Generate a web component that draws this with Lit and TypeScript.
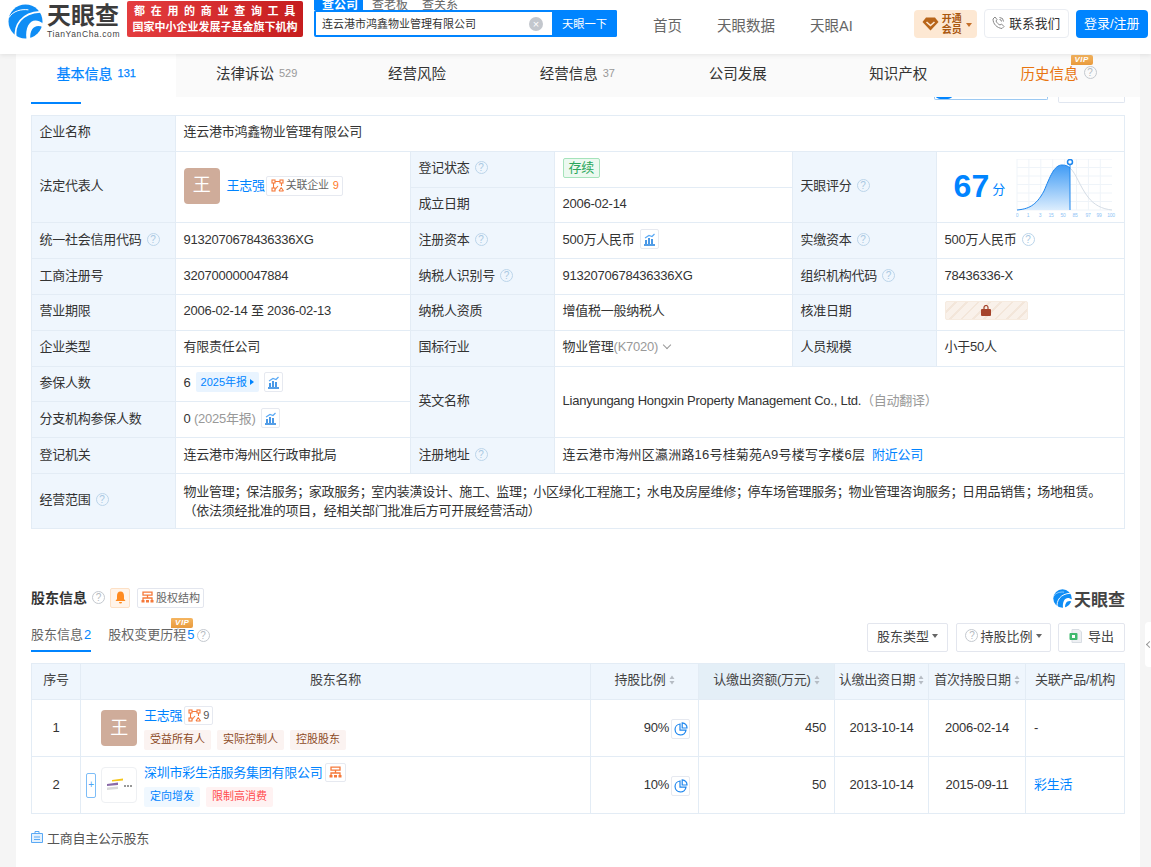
import { LitElement, html, css, svg } from "lit";
import { customElement } from "lit/decorators.js";

const swirl = (size: number) => html`<svg width=${size} height=${size} viewBox="0 0 36 36">
  <circle cx="18" cy="18" r="17.5" fill="#0f8df5"></circle>
  <path d="M8 35C6 22 14 9 33 8" fill="none" stroke="#fff" stroke-width="1.8"></path>
  <path d="M36 20C26 12 17 20 19 36L23 36C22 26 28 20 36 24Z" fill="#fff"></path>
  <path d="M1 14C5 7 14 5 21 6" fill="none" stroke="#fff" stroke-width="1"></path>
</svg>`;

const help = () => html`<span class="help">?</span>`;
const trend = () => html`<span class="mini"><svg width="13" height="13" viewBox="0 0 13 13">
  <path d="M1 12H12M3 11V7M6 11V5M9 11V6" fill="none" stroke="#1d7fe0" stroke-width="1.6"></path>
  <path d="M2 5L6 2.5L9 3.5L11.5 1" fill="none" stroke="#5aa9f5" stroke-width="1.2"></path>
</svg></span>`;
const graph = () => html`<svg width="13" height="13" viewBox="0 0 13 13" fill="none" stroke="#f5793a" stroke-width="1.1">
  <rect x="1" y="1" width="3" height="3"></rect><rect x="9" y="1" width="3" height="3"></rect>
  <rect x="1" y="9" width="3" height="3"></rect><path d="M4 2.5H9M2.5 4V9M7 7L4 10.5M10.5 4V7M8 12H12.5M10.2 8.5L8 12M10.2 8.5L12.5 12"></path>
</svg>`;
const orgIcon = () => html`<svg width="13" height="12" viewBox="0 0 13 12" fill="none" stroke="#f5793a" stroke-width="1.3">
  <path d="M2 1.2H11V4.2H2ZM6.5 4.2V7M2 10V7H11V10"></path><path d="M0.5 9H3.5V11.5H0.5ZM5 9H8V11.5H5ZM9.5 9H12.5V11.5H9.5Z" fill="#f5793a" stroke="none"></path>
</svg>`;
const pie = () => html`<span class="mini pie"><svg width="14" height="14" viewBox="0 0 14 14" fill="none" stroke="#1d86ee" stroke-width="1.2">
  <path d="M6 2A5.5 5.5 0 1 0 12 8.2H6Z"></path><path d="M8.2 0.8A5 5 0 0 1 13 6H8.2Z"></path>
</svg></span>`;
const sort = () => html`<svg class="sort" width="6" height="10" viewBox="0 0 6 10"><path d="M3 0.5L5.5 4H0.5ZM3 9.5L5.5 6H0.5Z" fill="#b6bcc4"></path></svg>`;
const vip = (cls: string) => html`<span class="vip ${cls}">VIP</span>`;

const gridLines = () => {
  const out = [];
  for (let x = 1; x <= 96; x += 11.9) out.push(svg`<path d="M${x} 0V51" stroke="#eff4f9" stroke-width="1"></path>`);
  for (let y = 0; y <= 51; y += 8.5) out.push(svg`<path d="M1 ${y}H96" stroke="#eff4f9" stroke-width="1"></path>`);
  return out;
};
const chartLabels: [string, number][] = [["0", 1], ["1", 12], ["3", 24], ["15", 35], ["50", 47], ["85", 59], ["97", 72], ["99", 83], ["100", 95]];

const SCOPE = "物业管理；保洁服务；家政服务；室内装潢设计、施工、监理；小区绿化工程施工；水电及房屋维修；停车场管理服务；物业管理咨询服务；日用品销售；场地租赁。";
const scopeText = () => SCOPE.split(/([；、。])/).map((s) => (/^[；、。]$/.test(s) ? html`<span class="p">${s}</span>` : s));

@customElement("app-root")
export class AppRoot extends LitElement {
  static styles = css`
    :host { display: block; font-family: "Liberation Sans", "Noto Sans CJK SC", sans-serif; font-size: 13px; color: #333; }
    * { box-sizing: border-box; }
    .page { min-height: 867px; height: 867px; overflow: hidden; background: #f5f5f5; position: relative; }
    header { height: 54px; background: #fff; display: flex; align-items: center; position: relative; z-index: 2; box-shadow: 0 1px 5px rgba(0,0,0,.09); overflow: hidden; }
    .logo { margin-left: 8px; display: flex; gap: 4px; align-items: center; height: 37px; margin-top: -11px; width: 112px; flex: none; }
    .logo-words { display: flex; flex-direction: column; width: 73px; }
    .logo-cn { font-size: 24px; line-height: 23px; font-weight: 700; color: #3c3c3c; letter-spacing: 0; }
    .logo-en { font-size: 8.5px; line-height: 12px; margin-top: 1px; color: #444; letter-spacing: .6px; white-space: nowrap; font-weight: 400; }
    .banner { margin-left: 7px; margin-top: -16px; width: 176px; height: 36px; border-radius: 2px; background: linear-gradient(90deg, #e43d3f, #c61d1e); color: #fff; font-size: 11px; line-height: 16px; font-weight: 700; display: flex; flex-direction: column; justify-content: center; align-items: center; flex: none; }
    .banner .spaced { letter-spacing: 5.7px; margin-right: -5px; }
    .search { margin-left: 11px; width: 303px; align-self: flex-start; flex: none; }
    .search-tabs { display: flex; height: 10px; overflow: hidden; align-items: flex-end; font-size: 12px; color: #666; }
    .search-tabs span { line-height: 10px; height: 10px; padding: 0 8px; margin-right: 1px; width: 49px; white-space: nowrap; }
    .search-tabs span.on { background: #0084ff; color: #fff; font-weight: 700; }
    .search-box { height: 27px; border: 2px solid #0084ff; border-radius: 2px; display: flex; align-items: center; }
    .search-text { flex: 1; padding: 0 0 2px 6px; font-size: 11px; color: #333; }
    .clear { width: 14px; height: 14px; border-radius: 50%; background: #c3c7cd; color: #fff; font-size: 11px; line-height: 14px; text-align: center; margin-right: 9px; }
    .go { width: 65px; height: 27px; margin-right: -2px; padding-bottom: 2px; background: #0084ff; color: #fff; font-size: 11.3px; display: flex; align-items: center; justify-content: center; border-radius: 0 2px 2px 0; }
    nav { display: flex; gap: 35px; margin-left: 36px; margin-top: -6px; font-size: 14.5px; color: #666; flex: none; }
    .open-vip { margin-left: 61px; margin-top: -6px; width: 63px; height: 28px; border-radius: 4px; background: #fde8d3; display: flex; align-items: center; padding-left: 8px; gap: 3px; color: #a9570f; font-size: 10px; line-height: 11px; font-weight: 700; flex: none; }
    .open-vip .caret { width: 0; height: 0; border: 3.5px solid transparent; border-top: 4px solid #c4702a; margin-top: 4px; margin-left: 1px; }
    .contact { margin-left: 7px; margin-top: -7px; width: 85px; height: 29px; padding-bottom: 2px; border: 1px solid #eaedf2; border-radius: 4px; display: flex; align-items: center; justify-content: center; gap: 4px; font-size: 12.7px; color: #333; flex: none; }
    .login { margin-left: 7px; margin-top: -6px; width: 72px; height: 28px; padding-bottom: 3px; background: #0084ff; color: #fff; border-radius: 4px; font-size: 13px; display: flex; align-items: center; justify-content: center; flex: none; }

    .tabs { margin-left: 16px; width: 1124px; height: 43px; background: #fafafa; display: flex; position: relative; }
    .tab { flex: 0 0 160.4px; display: flex; align-items: center; justify-content: center; gap: 5px; padding-bottom: 6px; font-size: 14.5px; color: #333; position: relative; }
    .tab small { font-size: 11px; color: #999; }
    .tab.on { background: #fff; color: #0084ff; font-size: 14px; -webkit-text-stroke: .25px #0084ff; }
    .tab.on small { color: #0084ff; }
    .tab.hist { color: #e87511; }
    .vip { position: absolute; background: linear-gradient(180deg, #f5b560, #e89a3c); color: #fff; font: italic 700 8px/10px "Liberation Sans", sans-serif; letter-spacing: .5px; text-align: center; width: 22px; height: 10px; border-radius: 1px 2px 2px 0; }
    .vip.t1 { right: 46px; top: 1px; }
    .vip.t2 { left: 63px; top: -5px; }
    .help { display: inline-block; width: 13px; height: 13px; border-radius: 50%; border: 1px solid #bcd5ea; color: #a9c8e2; font-size: 10px; line-height: 11px; text-align: center; vertical-align: 1px; margin-left: 5px; letter-spacing: 0; }
    .help.g, .tab .help { border-color: #c4c9cf; color: #b5bac0; }
    .tab .help { margin-left: 0; }

    main { margin-left: 16px; width: 1124px; height: 770px; background: #fff; padding: 0 15px; }
    .strip { height: 18px; display: flex; align-items: flex-start; }
    .strip .line { width: 50px; height: 2px; margin-top: 5px; background: #0084ff; }
    .toggle { margin-left: auto; margin-right: 10px; width: 114px; height: 3px; border: 1px solid #9cc9f2; border-top: 0; border-radius: 0 0 2px 2px; position: relative; overflow: hidden; }
    .toggle i { display: block; width: 18px; height: 10px; border-radius: 9px; background: #0084ff; margin-top: -8px; }
    .box { width: 67px; height: 6px; border: 1px solid #e0e6f0; border-top: 0; border-radius: 0 0 2px 2px; }

    table { border-collapse: collapse; table-layout: fixed; width: 1093px; }
    td, th { border: 1px solid #e3ecf5; padding: 0 8px; font-weight: 400; font-size: 13px; line-height: 19px; color: #333; letter-spacing: -.25px; }
    .info td { padding: 0 7px 3px 7.6px; }
    .info tr { height: 35.8px; }
    .info tr.scope { height: 55px; }
    .info tr.scope td.text { padding-bottom: 0; }
    .info td.l { background: #eff6fd; }
    .p { letter-spacing: -1.5px; }
    .addr { letter-spacing: .2px; }
    .cell-row { display: flex; align-items: center; }
    .avatar { width: 36px; height: 36px; border-radius: 4px; background: #cfac9a; color: #fff; font-size: 18px; display: flex; align-items: center; justify-content: center; flex: none; }
    .link { color: #0084ff; }
    .person .link { margin-left: 7px; }
    .rel { display: inline-flex; align-items: center; gap: 2px; border: 1px solid #e6e9f0; border-radius: 2px; height: 20px; padding: 0 3px 0 4px; font-size: 11px; color: #666; margin-left: 1px; }
    .rel b { font-weight: 400; color: #ff7a1f; margin-left: 2px; }
    .status { display: inline-block; height: 20px; line-height: 17px; padding: 0 5px; border: 1px solid #a5e3bb; border-radius: 2px; background: #ecf9f0; color: #2ba75c; font-size: 13px; }
    .score { font: 700 32px/36px "Liberation Sans", sans-serif; letter-spacing: 0; color: #0084ff; margin-left: 9px; }
    .fen { color: #0084ff; font-size: 13px; margin: 7px 11px 0 3px; }
    .chart { margin-top: 6px; margin-bottom: -3px; flex: none; }
    .mini { display: inline-flex; width: 19px; height: 20px; align-items: center; justify-content: center; border: 1px solid #e6e9f0; border-radius: 2px; margin-left: 5px; background: #fff; flex: none; }
    .lock { width: 83px; height: 19px; border-radius: 2px; background: repeating-linear-gradient(135deg, #f9f1ea 0 6px, #f3e6da 6px 8px); display: flex; align-items: center; justify-content: center; border: 1px solid #f6ebe0; }
    .report { display: inline-flex; align-items: center; gap: 3px; height: 20px; background: #e9f4ff; color: #0084ff; font-size: 11px; padding: 0 5px; border-radius: 2px; margin-left: 5px; letter-spacing: 0; }
    .report i { width: 0; height: 0; border: 3px solid transparent; border-left: 4px solid #0084ff; margin-right: -3px; }
    .grey { color: #999; }
    .arrow { display: inline-block; width: 6px; height: 6px; border-right: 1px solid #999; border-bottom: 1px solid #999; transform: rotate(45deg); margin: 0 0 3px 6px; }

    .sec-head { margin-top: 59px; height: 20px; display: flex; align-items: center; }
    .sec-title { font-size: 14px; font-weight: 700; color: #333; padding-bottom: 2px; }
    .bell { margin-left: 5px; width: 20px; height: 20px; border: 1px solid #fde0c5; background: #fff4ea; border-radius: 2px; display: flex; align-items: center; justify-content: center; }
    .struct { margin-left: 7px; height: 20px; width: 67px; padding-bottom: 1px; border: 1px solid #e3e6ee; border-radius: 2px; display: flex; align-items: center; justify-content: center; gap: 2px; font-size: 11px; color: #666; }
    .brand { margin-left: auto; display: flex; align-items: center; gap: 2px; font-size: 17px; font-weight: 700; color: #444; margin-top: 1px; }
    .subbar { margin-top: 15px; height: 29px; display: flex; }
    .sub { height: 29px; display: flex; align-items: flex-start; font-size: 13px; line-height: 23px; color: #666; position: relative; }
    .sub.on { border-bottom: 2px solid #0084ff; }
    .sub + .sub { margin-left: 17px; }
    .sub em { font-style: normal; color: #0084ff; margin-left: 1px; }
    .sub .help { margin: 6px 0 0 2px; }
    .btn { height: 29px; padding-bottom: 3px; border: 1px solid #e3e6ee; border-radius: 2px; display: flex; align-items: center; justify-content: center; font-size: 13px; color: #444; }
    .btn.a { margin-left: auto; width: 81px; }
    .btn.b { margin-left: 8px; width: 95px; }
    .btn.c { margin-left: 7px; width: 67px; gap: 6px; }
    .btn .help { margin: 0 2px 0 0; }
    .caret2 { width: 0; height: 0; border: 3px solid transparent; border-top: 4px solid #666; margin: 4px 0 0 3px; }

    .holders { margin-top: 11px; }
    .holders th { background: #eff6fd; height: 36px; padding: 0 2px 3px; text-align: center; color: #444; white-space: nowrap; }
    .holders th.hi { background: #e4eff7; }
    .holders .sort { margin-left: 3px; vertical-align: -1px; }
    .holders tbody tr { height: 57px; }
    .c { text-align: center; }
    .r { text-align: right; }
    .nameCell { display: flex; align-items: center; margin-top: 1px; }
    .plus { width: 10px; height: 25px; border: 1px solid #7dbdf7; border-radius: 2px; color: #4ca5f7; font-size: 10px; line-height: 22px; text-align: center; margin-left: -3px; margin-right: 5px; flex: none; }
    .noplus { width: 10px; margin-left: -3px; margin-right: 5px; flex: none; }
    .co { width: 36px; height: 36px; border: 1px solid #eef0f3; border-radius: 4px; flex: none; display: flex; align-items: center; justify-content: center; background: #fff; }
    .who { margin-left: 7px; margin-top: -1px; }
    .who-top { display: flex; align-items: center; height: 20px; }
    .badge { display: inline-flex; align-items: center; gap: 2px; margin-left: 2px; height: 19px; padding: 0 3px; border: 1px solid #e6e9f0; border-radius: 2px; font-size: 11px; color: #555; }
    .tags { display: flex; gap: 6px; margin-top: 5px; }
    .tag { height: 20px; line-height: 18px; padding: 0 6px; border-radius: 2px; font-size: 11px; letter-spacing: 0; background: #fbf3f1; color: #8c4a1f; }
    .tag.blue { background: #f0f8ff; color: #0084ff; }
    .tag.red { background: #fff2f2; color: #ff4d4f; }
    .pct { display: flex; justify-content: flex-end; align-items: center; margin-top: -1px; }
    .pct .mini { margin: 4px 0 0 2px; }
    .foot { margin-top: 14px; height: 20px; padding-bottom: 1px; display: flex; align-items: center; gap: 4px; color: #555; font-size: 13px; letter-spacing: -.25px; }

    .handle { position: absolute; left: 1145px; top: 622px; width: 6px; height: 45px; background: #fff; border-radius: 4px 0 0 4px; }
    .handle i { position: absolute; left: 2px; top: 20px; width: 5px; height: 5px; border-left: 1px solid #999; border-bottom: 1px solid #999; transform: rotate(45deg); }
  `;

  render() {
    return html`<div class="page">
      <header>
        <div class="logo">${swirl(35)}
          <div class="logo-words"><span class="logo-cn">天眼查</span><span class="logo-en">TianYanCha.com</span></div>
        </div>
        <div class="banner"><span class="spaced">都在用的商业查询工具</span><span>国家中小企业发展子基金旗下机构</span></div>
        <div class="search">
          <div class="search-tabs"><span class="on">查公司</span><span>查老板</span><span>查关系</span></div>
          <div class="search-box">
            <span class="search-text">连云港市鸿鑫物业管理有限公司</span><span class="clear">×</span><span class="go">天眼一下</span>
          </div>
        </div>
        <nav><span>首页</span><span>天眼数据</span><span>天眼AI</span></nav>
        <div class="open-vip">
          <svg width="17" height="14" viewBox="0 0 17 14"><path d="M4 0.5H13L16.5 5L8.5 13.5L0.5 5Z" fill="#b8651a"></path><path d="M4.5 5L8.5 8.5L12.5 5" fill="none" stroke="#fde8d3" stroke-width="1.6"></path></svg>
          <span>开通<br />会员</span><i class="caret"></i>
        </div>
        <div class="contact">
          <svg width="13" height="13" viewBox="0 0 13 13" fill="none" stroke="#888" stroke-width="1"><path d="M3 1L1 3C1 8 5 12 10 12.5L12 10.5L9.5 8L8 9C6.5 8.5 4.5 6.5 4 5L5 3.5Z"></path><path d="M7.5 1.5A4 4 0 0 1 11.5 5.5M7.5 3.5A2 2 0 0 1 9.5 5.5"></path></svg>
          <span>联系我们</span>
        </div>
        <div class="login">登录/注册</div>
      </header>

      <div class="tabs">
        <div class="tab on"><span>基本信息</span><small>131</small></div>
        <div class="tab"><span>法律诉讼</span><small>529</small></div>
        <div class="tab"><span>经营风险</span></div>
        <div class="tab"><span>经营信息</span><small>37</small></div>
        <div class="tab"><span>公司发展</span></div>
        <div class="tab"><span>知识产权</span></div>
        <div class="tab hist"><span>历史信息</span><span class="help g">?</span>${vip("t1")}</div>
      </div>

      <main>
        <div class="strip"><div class="line"></div><div class="toggle"><i></i></div><div class="box"></div></div>
        <table class="info">
          <colgroup><col width="144" /><col width="235" /><col width="144" /><col width="238" /><col width="144" /><col width="188" /></colgroup>
          <tbody>
            <tr><td class="l">企业名称</td><td colspan="5">连云港市鸿鑫物业管理有限公司</td></tr>
            <tr>
              <td class="l" rowspan="2">法定代表人</td>
              <td rowspan="2"><div class="cell-row person"><span class="avatar">王</span><span class="link">王志强</span><span class="rel">${graph()}关联企业<b>9</b></span></div></td>
              <td class="l">登记状态${help()}</td><td><span class="status">存续</span></td>
              <td class="l" rowspan="2">天眼评分${help()}</td>
              <td rowspan="2"><div class="cell-row"><span class="score">67</span><span class="fen">分</span>
                <svg class="chart" width="100" height="62" viewBox="0 0 100 62">
                  <defs><linearGradient id="bell" x1="0" y1="0" x2="0" y2="1"><stop offset="0" stop-color="#3f9bf5"></stop><stop offset="1" stop-color="#dcedfd"></stop></linearGradient></defs>
                  ${gridLines()}
                  <path d="M1 51C12 50 20 47 28 32C34 18 38 6 46 6C50 6 52 7 54 9V51Z" fill="url(#bell)"></path>
                  <path d="M1 51C12 50 20 47 28 32C34 18 38 6 46 6C50 6 52 7 54 9" fill="none" stroke="#1d86ee" stroke-width="1"></path>
                  <path d="M54 9C60 14 64 28 72 38C78 46 86 50 96 51" fill="none" stroke="#d5dde6" stroke-width="1"></path>
                  <path d="M54 4V51" stroke="#1d86ee" stroke-width="1"></path>
                  <circle cx="54" cy="3" r="2.5" fill="#fff" stroke="#1d86ee" stroke-width="1.5"></circle>
                  ${chartLabels.map(([t, x]) => svg`<text x=${x} y="57.5" text-anchor="middle" font-size="5" fill="#8fc4f5">${t}</text>`)}
                </svg></div></td>
            </tr>
            <tr><td class="l">成立日期</td><td>2006-02-14</td></tr>
            <tr><td class="l">统一社会信用代码${help()}</td><td>9132070678436336XG</td><td class="l">注册资本${help()}</td><td><div class="cell-row">500万人民币${trend()}</div></td><td class="l">实缴资本${help()}</td><td>500万人民币${help()}</td></tr>
            <tr><td class="l">工商注册号</td><td>320700000047884</td><td class="l">纳税人识别号${help()}</td><td>9132070678436336XG</td><td class="l">组织机构代码${help()}</td><td>78436336-X</td></tr>
            <tr><td class="l">营业期限</td><td>2006-02-14 至 2036-02-13</td><td class="l">纳税人资质</td><td>增值税一般纳税人</td><td class="l">核准日期</td>
              <td><div class="lock"><svg width="10" height="11" viewBox="0 0 10 11"><path d="M3 4V2.5A2 2 0 0 1 7 2.5V4" fill="none" stroke="#a5432b" stroke-width="1.2"></path><rect x="0" y="4" width="10" height="7" rx="1" fill="#a5432b"></rect></svg></div></td></tr>
            <tr><td class="l">企业类型</td><td>有限责任公司</td><td class="l">国标行业</td><td>物业管理<span class="grey">(K7020)</span><i class="arrow"></i></td><td class="l">人员规模</td><td>小于50人</td></tr>
            <tr><td class="l">参保人数</td><td><div class="cell-row">6<span class="report">2025年报<i></i></span>${trend()}</div></td><td class="l" rowspan="2">英文名称</td><td colspan="3" rowspan="2">Lianyungang Hongxin Property Management Co., Ltd.<span class="grey">（自动翻译）</span></td></tr>
            <tr><td class="l">分支机构参保人数</td><td><div class="cell-row">0&nbsp;<span class="grey">(2025年报)</span>${trend()}</div></td></tr>
            <tr><td class="l">登记机关</td><td>连云港市海州区行政审批局</td><td class="l">注册地址${help()}</td><td colspan="3"><span class="addr">连云港市海州区瀛洲路16号桂菊苑A9号楼写字楼6层</span><span class="link">&nbsp;&nbsp;附近公司</span></td></tr>
            <tr class="scope"><td class="l">经营范围${help()}</td><td class="text" colspan="5">${scopeText()}<br />（依法须经批准的项目，经相关部门批准后方可开展经营活动）</td></tr>
          </tbody>
        </table>

        <div class="sec-head">
          <span class="sec-title">股东信息</span><span class="help g">?</span>
          <span class="bell"><svg width="11" height="13" viewBox="0 0 11 13"><path d="M5.5 0.5C8 0.5 9 2.5 9 5V8L10.5 10H0.5L2 8V5C2 2.5 3 0.5 5.5 0.5ZM4 11H7A1.5 1.5 0 0 1 4 11Z" fill="#ff8a1f"></path></svg></span>
          <span class="struct">${orgIcon()}股权结构</span>
          <span class="brand">${swirl(19)}天眼查</span>
        </div>
        <div class="subbar">
          <div class="sub on">股东信息<em>2</em></div>
          <div class="sub">股权变更历程<em>5</em><span class="help g">?</span>${vip("t2")}</div>
          <div class="btn a">股东类型<i class="caret2"></i></div>
          <div class="btn b"><span class="help g">?</span>持股比例<i class="caret2"></i></div>
          <div class="btn c"><svg width="13" height="14" viewBox="0 0 13 14"><path d="M3 0.5H10L12.5 3V13.5H3Z" fill="#eef0f3" stroke="#d8dde3"></path><rect x="0.5" y="4" width="8" height="7" rx="1" fill="#3fb96e"></rect><rect x="3" y="6" width="3" height="3" fill="#fff"></rect></svg>导出</div>
        </div>
        <table class="holders">
          <colgroup><col width="49" /><col width="510" /><col width="108" /><col width="136" /><col width="94" /><col width="97" /><col width="99" /></colgroup>
          <thead><tr>
            <th>序号</th><th>股东名称</th><th>持股比例${sort()}</th><th class="hi">认缴出资额(万元)${sort()}</th><th>认缴出资日期${sort()}</th><th>首次持股日期${sort()}</th><th>关联产品/机构</th>
          </tr></thead>
          <tbody>
            <tr>
              <td class="c">1</td>
              <td><div class="nameCell"><span class="noplus"></span><span class="avatar">王</span>
                <div class="who"><div class="who-top"><span class="link">王志强</span><span class="badge">${graph()}9</span></div>
                  <div class="tags"><span class="tag">受益所有人</span><span class="tag">实际控制人</span><span class="tag">控股股东</span></div></div></div></td>
              <td><div class="pct">90%${pie()}</div></td><td class="r">450</td><td class="c">2013-10-14</td><td class="c">2006-02-14</td><td>-</td>
            </tr>
            <tr>
              <td class="c">2</td>
              <td><div class="nameCell"><span class="plus">+</span><span class="co"><svg width="30" height="14" viewBox="0 0 30 14"><path d="M3 6L14 4.5V7L3 8Z" fill="#8a6aa8"></path><path d="M8 2L19 0.5V2.5L8 3.5Z" fill="#f5c518"></path><path d="M3 9.5L14 8.5V11L3 12Z" fill="#d9d9d9"></path><path d="M20 8H29" stroke="#777" stroke-width="1.6" stroke-dasharray="2 1"></path></svg></span>
                <div class="who"><div class="who-top"><span class="link">深圳市彩生活服务集团有限公司</span><span class="badge">${orgIcon()}</span></div>
                  <div class="tags"><span class="tag blue">定向增发</span><span class="tag red">限制高消费</span></div></div></div></td>
              <td><div class="pct">10%${pie()}</div></td><td class="r">50</td><td class="c">2013-10-14</td><td class="c">2015-09-11</td><td class="link">彩生活</td>
            </tr>
          </tbody>
        </table>
        <div class="foot"><svg width="12" height="12" viewBox="0 0 12 12" fill="none" stroke="#5aa9f5"><path d="M0.5 2.5H11.5V11.5H0.5Z" fill="#e4f1fd"></path><path d="M4 0.5H8V2.5H4ZM3 6H9M3 8.5H9"></path></svg>工商自主公示股东</div>
      </main>
      <div class="handle"><i></i></div>
    </div>`;
  }
}
